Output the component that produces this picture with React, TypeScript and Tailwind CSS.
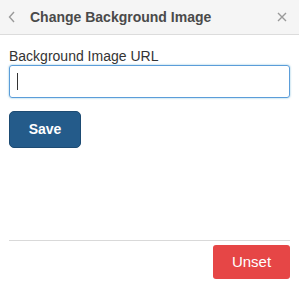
import React from "react";

function App() {
  return (
    <div className="w-[299px] h-[298px] bg-white flex flex-col font-['Liberation_Sans',Arial,sans-serif]">
      <div className="h-[35px] bg-[#f5f5f5] border-b border-[#dcdcdc] flex items-center pl-[8px] pr-[12px]">
        <svg width="8" height="12" viewBox="0 0 8 12" className="mr-[14px]">
          <path d="M6 1 L1.5 6 L6 11" stroke="#9a9a9a" strokeWidth="1.4" fill="none" />
        </svg>
        <h1 className="text-[14px] font-bold text-[#4a4a4a] flex-1">Change Background Image</h1>
        <svg width="10" height="10" viewBox="0 0 10 10">
          <path d="M1 1 L9 9 M9 1 L1 9" stroke="#9a9a9a" strokeWidth="1.4" />
        </svg>
      </div>
      <div className="px-[9px] pt-[13px] flex-1">
        <label className="block text-[14px] text-[#333] leading-[16px]">Background Image URL</label>
        <div className="mt-[1px] h-[33px] border border-[#5b9dd9] rounded-[3px] shadow-[0_0_2px_rgba(30,140,190,0.6)] flex items-center pl-[7px]">
          <div className="w-[1px] h-[17px] bg-[#333]" />
        </div>
        <button className="mt-[13px] w-[72px] h-[37px] bg-[#245b8a] border border-[#1d4b73] rounded-[5px] text-white text-[14px] font-bold">
          Save
        </button>
      </div>
      <div className="mx-[9px] border-t border-[#d9d9d9] pt-[4px] pb-[19px] flex justify-end">
        <button className="w-[77px] h-[34px] bg-[#e64646] rounded-[3px] text-white text-[15px]">Unset</button>
      </div>
    </div>
  );
}

export default App;
